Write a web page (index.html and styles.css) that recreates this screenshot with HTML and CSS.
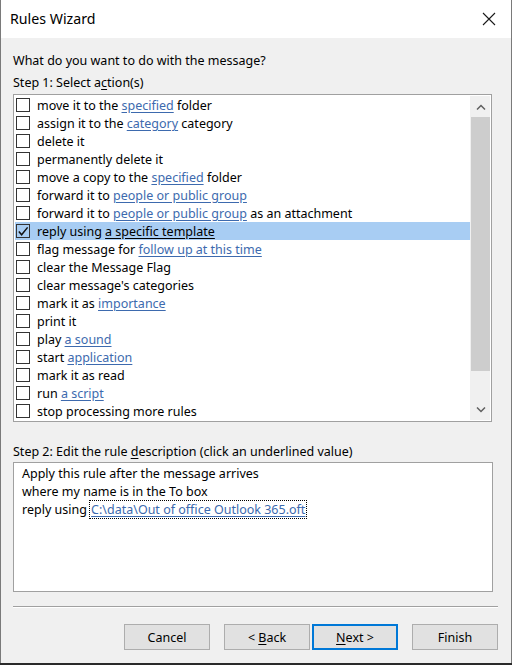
FILE: index.html
```html
<!DOCTYPE html>
<html>
<head>
<meta charset="utf-8">
<link rel="stylesheet" href="styles.css">
</head>
<body>
<div class="window">
  <div class="titlebar">
    <span class="title">Rules Wizard</span>
    <svg class="close" width="14" height="14" viewBox="0 0 14 14"><path d="M1 1 L13 13 M13 1 L1 13" stroke="#1a1a1a" stroke-width="1.1" fill="none"/></svg>
  </div>
  <div class="content">
    <div class="label prompt">What do you want to do with the message?</div>
    <div class="label">Step 1: Select a<u>c</u>tion(s)</div>
    <div class="listbox">
      <div class="rows">
        <div class="row"><span class="cb"></span><span class="txt">move it to the <a>specified</a> folder</span></div>
        <div class="row"><span class="cb"></span><span class="txt">assign it to the <a>category</a> category</span></div>
        <div class="row"><span class="cb"></span><span class="txt">delete it</span></div>
        <div class="row"><span class="cb"></span><span class="txt">permanently delete it</span></div>
        <div class="row"><span class="cb"></span><span class="txt">move a copy to the <a>specified</a> folder</span></div>
        <div class="row"><span class="cb"></span><span class="txt">forward it to <a>people or public group</a></span></div>
        <div class="row"><span class="cb"></span><span class="txt">forward it to <a>people or public group</a> as an attachment</span></div>
        <div class="row selected"><span class="cb checked"><svg width="13" height="13" viewBox="0 0 13 13"><path d="M2 6.5 L5 10 L11.5 2" stroke="#111" stroke-width="1.6" fill="none"/></svg></span><span class="txt">reply using <a class="sel-link">a specific template</a></span></div>
        <div class="row"><span class="cb"></span><span class="txt">flag message for <a>follow up at this time</a></span></div>
        <div class="row"><span class="cb"></span><span class="txt">clear the Message Flag</span></div>
        <div class="row"><span class="cb"></span><span class="txt">clear message's categories</span></div>
        <div class="row"><span class="cb"></span><span class="txt">mark it as <a>importance</a></span></div>
        <div class="row"><span class="cb"></span><span class="txt">print it</span></div>
        <div class="row"><span class="cb"></span><span class="txt">play <a>a sound</a></span></div>
        <div class="row"><span class="cb"></span><span class="txt">start <a>application</a></span></div>
        <div class="row"><span class="cb"></span><span class="txt">mark it as read</span></div>
        <div class="row"><span class="cb"></span><span class="txt">run <a>a script</a></span></div>
        <div class="row"><span class="cb"></span><span class="txt">stop processing more rules</span></div>
      </div>
      <div class="scrollbar">
        <div class="sb-btn"><svg width="10" height="6" viewBox="0 0 10 6"><path d="M1 5.5 L5 1.5 L9 5.5" stroke="#606060" stroke-width="1.5" fill="none"/></svg></div>
        <div class="thumb"></div>
        <div class="track"></div>
        <div class="sb-btn"><svg width="10" height="6" viewBox="0 0 10 6"><path d="M1 0.5 L5 4.5 L9 0.5" stroke="#606060" stroke-width="1.5" fill="none"/></svg></div>
      </div>
    </div>
    <div class="label step2">Step 2: Edit the rule <u>d</u>escription (click an underlined value)</div>
    <div class="descbox">
      <div class="dline">Apply this rule after the message arrives</div>
      <div class="dline">where my name is in the To box</div>
      <div class="dline">reply using <a class="focus">C:\data\Out of office Outlook 365.oft</a></div>
    </div>
    <div class="separator"></div>
    <div class="buttons">
      <button class="btn">Cancel</button>
      <button class="btn back">&lt; <u>B</u>ack</button>
      <button class="btn default"><u>N</u>ext &gt;</button>
      <button class="btn finish">Finish</button>
    </div>
  </div>
</div>
</body>
</html>
```
FILE: styles.css
```css
* { box-sizing: border-box; }
html, body { margin: 0; padding: 0; }
body {
  background: #2a2a2a;
  font-family: "Noto Sans", "Open Sans", sans-serif;
  font-size: 12.5px;
  color: #000;
  width: 512px;
  height: 665px;
  overflow: hidden;
}
.window {
  width: 512px;
  height: 663px;
  background: #f0f0f0;
  border-left: 1px solid #7a7a7a;
  border-right: 1px solid #7a7a7a;
  display: flex;
  flex-direction: column;
}
.titlebar {
  height: 38px;
  background: #fff;
  display: flex;
  align-items: center;
  justify-content: space-between;
  padding: 0 15px 0 9px;
  flex: none;
}
.title {
  font-size: 14.2px;
  color: #000;
  margin-top: -1px;
}
.close { display: block; margin-top: -1px; }
.content {
  padding: 0 13px 0 12px;
  display: flex;
  flex-direction: column;
}
.label {
  line-height: 18px;
  height: 18px;
  white-space: nowrap;
}
.prompt { margin-top: 14px; margin-bottom: 4px; }
.listbox {
  margin-top: 2px;
  height: 328px;
  width: 479px;
  border: 1px solid #a0a0a0;
  background: #fff;
  padding: 1px;
  display: flex;
}
.rows { flex: 1; }
.row {
  height: 18px;
  display: flex;
  align-items: center;
  white-space: nowrap;
  padding-left: 1px;
}
.txt { white-space: pre; line-height: 18px; padding-top: 2px; }
.row.selected { background: #a8cdf3; }
.cb {
  width: 14px;
  height: 14px;
  border: 1px solid #333;
  background: #fff;
  margin-right: 7px;
  flex: none;
  display: flex;
  align-items: center;
  justify-content: center;
}
.cb.checked svg { display: block; }
.row.selected .cb.checked { background: transparent; }
a {
  color: #3d6aae;
  text-decoration: underline;
  text-underline-offset: 2px;
}
a.sel-link { color: #000; }
u { text-underline-offset: 2px; }
.scrollbar {
  width: 20px;
  flex: none;
  background: #f0f0f0;
  display: flex;
  flex-direction: column;
}
.sb-btn {
  height: 21px;
  display: flex;
  align-items: center;
  justify-content: center;
  padding-left: 1px;
}
.thumb {
  height: 254px;
  background: #cdcdcd;
  margin-left: 1px;
}
.track { flex: 1; }
.step2 { margin-top: 21px; margin-bottom: 1px; }
.descbox {
  height: 130px;
  width: 480px;
  border: 1px solid #a0a0a0;
  background: #fff;
  padding: 2px 8px;
}
.dline { height: 18px; line-height: 18px; white-space: pre; }
a.focus { outline: 1px dotted #000; outline-offset: 0; padding: 0 1px; }
.separator {
  margin-top: 14px;
  height: 2px;
  width: 485px;
  border-top: 1px solid #a0a0a0;
  border-bottom: 1px solid #ffffff;
}
.buttons {
  margin-top: 16px;
  display: flex;
  justify-content: flex-end;
  width: 485px;
}
.btn {
  width: 86px;
  height: 26px;
  background: #e1e1e1;
  border: 1px solid #adadad;
  font-family: inherit;
  font-size: 12.5px;
  color: #000;
  padding: 0;
  margin: 0;
}
.btn.back { margin-left: 14px; }
.btn.default { margin-left: 2px; border: 2px solid #0078d7; }
.btn.finish { margin-left: 14px; }
```
